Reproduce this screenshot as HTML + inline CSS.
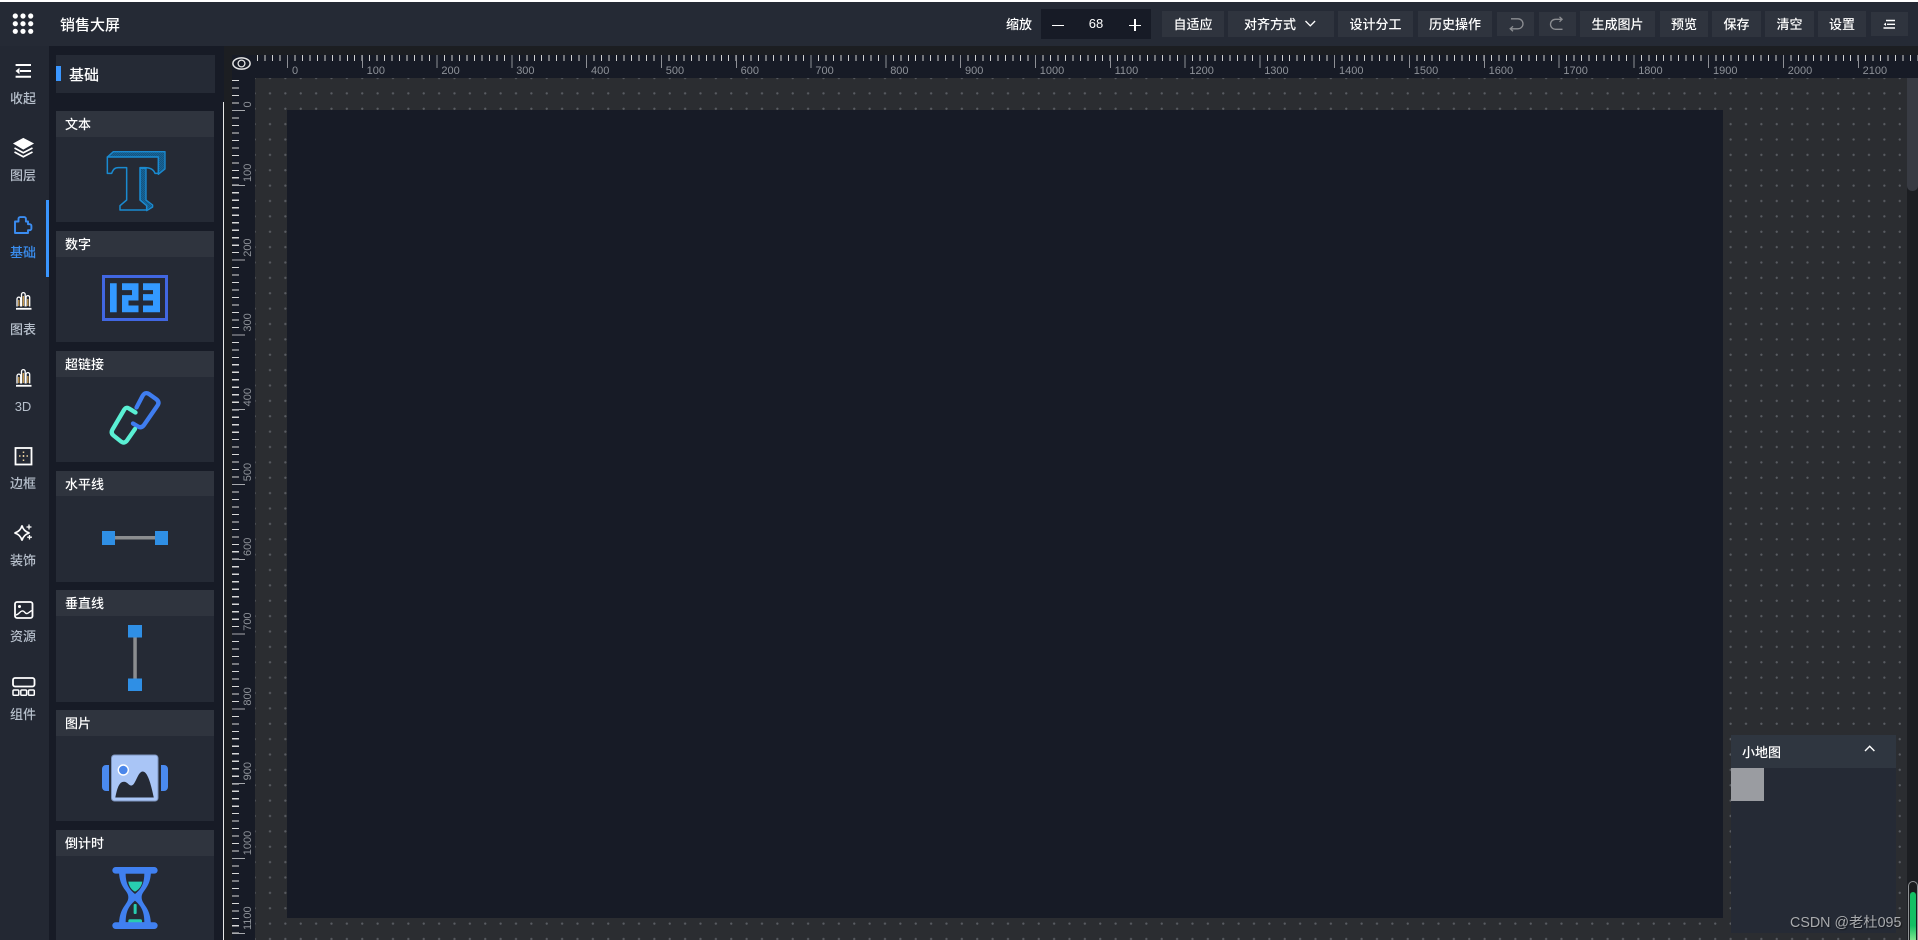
<!DOCTYPE html>
<html lang="zh-CN">
<head>
<meta charset="utf-8">
<title>销售大屏</title>
<style>
html,body{margin:0;padding:0;width:1918px;height:940px;overflow:hidden;background:#1c1e22}
body{position:relative;font-family:"Liberation Sans","Noto Sans CJK SC",sans-serif;color:#fff;font-size:13px;font-weight:500}
.a{position:absolute}
.t{position:absolute;white-space:nowrap;line-height:20px}
.btn{position:absolute;top:11px;height:26px;box-sizing:border-box;padding-top:1px;background:#2f343e;display:flex;align-items:center;justify-content:center;font-size:13px;color:#fff;line-height:1}
.nav{position:absolute;left:0;width:46px;text-align:center;font-size:13px;line-height:18px;color:#b6bfcb}
.head{position:absolute;left:56px;width:158px;height:26px;background:#2f343e;font-size:13px;line-height:28px;text-indent:9px;color:#fff}
.body{position:absolute;left:56px;width:158px;background:#252a35}
.hl{position:absolute;top:66px;font-size:11px;line-height:10px;color:#8e9299;font-weight:400;font-family:"Liberation Sans",sans-serif}
svg{position:absolute;overflow:visible}
</style>
</head>
<body>
<div class="a" style="left:0;top:2px;width:1918px;height:44px;background:#252a35"></div>
<div class="a" style="left:0;top:0;width:1918px;height:2px;background:#fff"></div>
<div class="a" style="left:0;top:46px;width:49px;height:894px;background:#232833"></div>
<div class="a" style="left:49px;top:46px;width:175px;height:894px;background:#171b26"></div>
<div class="a" style="left:46px;top:200px;width:3px;height:77px;background:#3a96ff"></div>
<div class="a" style="left:223px;top:102px;width:1px;height:838px;background:#e8e8e8"></div>

<!-- canvas area -->
<div class="a" style="left:255px;top:78px;width:1652px;height:862px;background-color:#2b2d31;background-image:radial-gradient(circle at center,#595c62 0,#595c62 .9px,rgba(89,92,98,0) 1.4px);background-size:15.39px 15.39px;background-position:7.3px -7.7px"></div>
<div class="a" style="left:287px;top:110px;width:1436px;height:808px;background:#171b26"></div>
<div class="a" style="left:1907px;top:78px;width:11px;height:862px;background:#1c1e22"></div>
<div class="a" style="left:1907px;top:78px;width:11px;height:113px;background:#383b43;border-radius:0 0 5px 5px"></div>

<!-- horizontal ruler -->
<div class="a" style="left:232px;top:55px;width:1686px;height:23px;background:#171b26"></div>
<div class="a" style="left:257.38px;top:55px;width:1661px;height:6px;background:repeating-linear-gradient(90deg,#cfcfcf 0,#cfcfcf 1px,transparent 1px,transparent 7.48px)"></div>
<div class="a" style="left:287.3px;top:55px;width:1631px;height:13px;background:repeating-linear-gradient(90deg,#8e9096 0,#8e9096 1px,transparent 1px,transparent 74.8px)"></div>
<span class="hl" style="left:292px">0</span><span class="hl" style="left:366.6px">100</span><span class="hl" style="left:441.4px">200</span><span class="hl" style="left:516.2px">300</span><span class="hl" style="left:591px">400</span><span class="hl" style="left:665.8px">500</span><span class="hl" style="left:740.6px">600</span><span class="hl" style="left:815.4px">700</span><span class="hl" style="left:890.2px">800</span><span class="hl" style="left:965px">900</span><span class="hl" style="left:1039.8px">1000</span><span class="hl" style="left:1114.6px">1100</span><span class="hl" style="left:1189.4px">1200</span><span class="hl" style="left:1264.2px">1300</span><span class="hl" style="left:1339px">1400</span><span class="hl" style="left:1413.8px">1500</span><span class="hl" style="left:1488.6px">1600</span><span class="hl" style="left:1563.4px">1700</span><span class="hl" style="left:1638.2px">1800</span><span class="hl" style="left:1713px">1900</span><span class="hl" style="left:1787.8px">2000</span><span class="hl" style="left:1862.6px">2100</span>

<!-- vertical ruler -->
<div class="a" style="left:232px;top:78px;width:23px;height:862px;background:#171b26"></div>
<div class="a" style="left:232px;top:80px;width:7px;height:860px;background:repeating-linear-gradient(180deg,#d8d8d8 0,#d8d8d8 1.2px,transparent 1.2px,transparent 7.48px)"></div>
<div class="a" style="left:232px;top:110px;width:13px;height:830px;background:repeating-linear-gradient(180deg,#a8aaae 0,#a8aaae 1px,transparent 1px,transparent 74.8px)"></div>
<svg style="left:0;top:0" width="1918" height="940" font-family="Liberation Sans,sans-serif" font-size="11" font-weight="400" fill="#8e9299">
<text transform="translate(251,107.500) rotate(-90)">0</text>
<text transform="translate(251,182) rotate(-90)">100</text>
<text transform="translate(251,256.800) rotate(-90)">200</text>
<text transform="translate(251,331.600) rotate(-90)">300</text>
<text transform="translate(251,406.400) rotate(-90)">400</text>
<text transform="translate(251,481.200) rotate(-90)">500</text>
<text transform="translate(251,556) rotate(-90)">600</text>
<text transform="translate(251,630.800) rotate(-90)">700</text>
<text transform="translate(251,705.600) rotate(-90)">800</text>
<text transform="translate(251,780.400) rotate(-90)">900</text>
<text transform="translate(251,855.200) rotate(-90)">1000</text>
<text transform="translate(251,930) rotate(-90)">1100</text>
</svg>
<svg style="left:0;top:0" width="1918" height="940">
<ellipse cx="241.500" cy="63.500" rx="8.600" ry="5.600" fill="none" stroke="#e4e4e4" stroke-width="1.500"/>
<circle cx="241.500" cy="63.500" r="3.400" fill="none" stroke="#e4e4e4" stroke-width="1.300"/>
</svg>

<!-- top bar -->
<svg style="left:0;top:0" width="60" height="46" fill="#fff">
<circle cx="15.300" cy="16" r="2.600"/><circle cx="23" cy="16" r="2.600"/><circle cx="30.700" cy="16" r="2.600"/>
<circle cx="15.300" cy="23.700" r="2.600"/><circle cx="23" cy="23.700" r="2.600"/><circle cx="30.700" cy="23.700" r="2.600"/>
<circle cx="15.300" cy="31.300" r="2.600"/><circle cx="23" cy="31.300" r="2.600"/><circle cx="30.700" cy="31.300" r="2.600"/>
</svg>
<span class="t" style="left:60px;top:16px;font-size:15px">销售大屏</span>
<span class="t" style="left:1006px;top:15px">缩放</span>
<div class="a" style="left:1041px;top:9px;width:110px;height:30px;background:#171b26"></div>
<div class="a" style="left:1052px;top:24.500px;width:12px;height:1.500px;background:#fff"></div>
<div class="a" style="left:1129px;top:24.500px;width:12px;height:1.500px;background:#fff"></div>
<div class="a" style="left:1134.300px;top:19px;width:1.500px;height:12px;background:#fff"></div>
<span class="t" style="left:1086px;top:13.500px;font-size:13px;width:20px;text-align:center">68</span>
<div class="btn" style="left:1162px;width:62px">自适应</div>
<div class="btn" style="left:1228px;width:106px;justify-content:flex-start;padding-left:0"><span style="margin-left:16px">对齐方式</span></div>
<svg style="left:0;top:0" width="1400" height="46"><path d="M1305.500 21l4.800 4.800 4.800-4.800" fill="none" stroke="#fff" stroke-width="1.300"/></svg>
<div class="btn" style="left:1338px;width:75px">设计分工</div>
<div class="btn" style="left:1418px;width:74px">历史操作</div>
<div class="btn" style="left:1497px;top:12px;height:24px;width:37px"></div>
<div class="btn" style="left:1539px;top:12px;height:24px;width:37px"></div>
<div class="btn" style="left:1580px;width:75px">生成图片</div>
<div class="btn" style="left:1660px;width:48px">预览</div>
<div class="btn" style="left:1712px;width:49px">保存</div>
<div class="btn" style="left:1765px;width:49px">清空</div>
<div class="btn" style="left:1818px;width:48px">设置</div>
<div class="btn" style="left:1871px;top:12px;height:24px;width:37px"></div>
<svg style="left:0;top:0" width="1918" height="46" fill="none">
<path d="M1511 18.800h7a5 5 0 0 1 0 10h-7.500M1513 26.300l-2.800 2.500 2.800 2.400" stroke="#8c8e92" stroke-width="1.300"/>
<path d="M1561.500 19.300h-6a5 5 0 0 0 0 10h7M1559.500 16.800l2.600 2.500-2.600 2.500" stroke="#8c8e92" stroke-width="1.300"/>
<path d="M1886 20.500h9M1887 24.300h8M1883.500 28h11.500" stroke="#fff" stroke-width="1.400"/>
<path d="M1886 22.600v3.400l-2.300-1.700z" fill="#fff"/>
</svg>

<!-- sidebar nav -->
<svg style="left:0;top:0" width="49" height="720" fill="none" stroke="#fff">
<path d="M15.600 65H31M20 71h11M15.600 76.800H31" stroke-width="2"/>
<path d="M19.500 67.800v6.400l-4-3.200z" fill="#fff" stroke="none"/>
<path d="M23.300 138.500l9.700 5-9.700 5.500-9.300-5.500z" fill="#fff" stroke="#fff" stroke-width="1"/>
<path d="M14.500 148l8.800 4.800 9.200-4.800M14.500 152l8.800 4.800 9.200-4.800" stroke-width="1.700"/>
<path d="M15 221.500h3.500v-2.700a1.700 1.700 0 0 1 1.700-1.700h4a1.700 1.700 0 0 1 1.700 1.700v2.700h2.100v2.700h1.700a1.700 1.700 0 0 1 1.700 1.700v2.600a1.700 1.700 0 0 1-1.700 1.700h-1.700v2.800H15z" stroke="#3b8df2" stroke-width="1.900" stroke-linejoin="round"/>
<g stroke-width="1.300"><path d="M17 306.500v-7.500a1.700 1.700 0 0 1 3.700 0v7.500M21.500 306.500v-12a1.700 1.700 0 0 1 3.700 0v12M26 306.500v-9a1.700 1.700 0 0 1 3.700 0v9"/><path d="M16 308.800h15.500" stroke-width="1.800"/><path d="M18.800 300v6M23.300 296v10M27.800 299v7" stroke="#d9a650" stroke-width="1.200"/></g>
<g stroke-width="1.300"><path d="M17 383.500v-7.500a1.700 1.700 0 0 1 3.700 0v7.500M21.500 383.500v-12a1.700 1.700 0 0 1 3.700 0v12M26 383.500v-9a1.700 1.700 0 0 1 3.700 0v9"/><path d="M16 385.800h15.500" stroke-width="1.800"/><path d="M18.800 377v6M23.300 373v10M27.800 376v7" stroke="#d9a650" stroke-width="1.200"/></g>
<rect x="15.500" y="448" width="16" height="16.500" stroke-width="1.800"/>
<path d="M23.500 451.500v1.500M23.500 455v2M23.500 459.500v1.500M19 456h1.500M26.500 456h1.500" stroke="#e8d0a0" stroke-width="1.500"/>
<path d="M22 525.500Q23.500 531.500 29.500 533 23.500 534.500 22 540.500 20.500 534.500 14.500 533 20.500 531.500 22 525.500z" stroke-width="1.600"/>
<path d="M29 524.500v5M26.500 527h5M29.500 535v4.500M27.200 537.200h4.700" stroke-width="1.300"/>
<rect x="15" y="602" width="17.500" height="16" rx="2" stroke-width="1.800"/>
<circle cx="19.500" cy="606.500" r="1.500" fill="#fff" stroke="none"/>
<path d="M16 615c3-.500 3.500-3.500 6-4 3-.500 2.500 3 5 2.500 2-.300 3-2.500 5-3" stroke-width="1.400"/>
<rect x="13" y="678" width="21.500" height="8.500" rx="2" stroke-width="1.800"/>
<rect x="13" y="690" width="5.800" height="5.200" rx="1" stroke-width="1.500"/>
<rect x="20.800" y="690" width="5.800" height="5.200" rx="1" stroke-width="1.500"/>
<rect x="28.500" y="690" width="5.800" height="5.200" rx="1" stroke-width="1.500"/>
</svg>
<div class="nav" style="top:90px">收起</div>
<div class="nav" style="top:167px">图层</div>
<div class="nav" style="top:244px;color:#3a8ef0">基础</div>
<div class="nav" style="top:321px">图表</div>
<div class="nav" style="top:398px">3D</div>
<div class="nav" style="top:475px">边框</div>
<div class="nav" style="top:552px">装饰</div>
<div class="nav" style="top:628px">资源</div>
<div class="nav" style="top:706px">组件</div>

<!-- panel -->
<div class="a" style="left:56px;top:55px;width:159px;height:38px;background:#252a35"></div>
<div class="a" style="left:56px;top:66px;width:5px;height:15px;background:#3a96ff"></div>
<span class="t" style="left:69px;top:66px;font-size:15px">基础</span>

<div class="body" style="top:137px;height:85px"></div><div class="head" style="top:111px">文本</div>
<div class="body" style="top:257px;height:85px"></div><div class="head" style="top:231px">数字</div>
<div class="body" style="top:377px;height:85px"></div><div class="head" style="top:351px">超链接</div>
<div class="body" style="top:496px;height:86px"></div><div class="head" style="top:471px;height:25px;line-height:27px">水平线</div>
<div class="body" style="top:616px;height:86px"></div><div class="head" style="top:590px">垂直线</div>
<div class="body" style="top:736px;height:85px"></div><div class="head" style="top:710px">图片</div>
<div class="body" style="top:856px;height:84px"></div><div class="head" style="top:830px">倒计时</div>

<svg style="left:0;top:0" width="230" height="940">
<defs>
<pattern id="dith" width="2" height="2" patternUnits="userSpaceOnUse"><rect width="2" height="2" fill="#123a58"/><rect width="1" height="1" fill="#1a7fc0"/><rect x="1" y="1" width="1" height="1" fill="#1a7fc0"/></pattern>
</defs>
<!-- T -->
<g transform="translate(100,145) scale(.3333)" stroke-linejoin="round">
<path d="M22 36L40 20H195V72L175 88V36zM120 70H138V165L158 180V186L140 197V182L120 165z" fill="url(#dith)" stroke="#1a8ad0" stroke-width="4"/>
<path d="M22 36H175V85H165C160 72 150 68 135 68H120V165L140 182V195H60V182L80 165V68H55C45 68 40 72 35 85H22z" fill="#252a35" stroke="#1a8ad0" stroke-width="4.500"/>
</g>
<!-- 123 -->
<rect x="103.500" y="276.500" width="63" height="43" fill="none" stroke="#4167e2" stroke-width="3"/>
<path d="M110 283.300h6.700v29H110zM122 283.300h16.500v17.200h-10v5h10v6.800H122V295.100h10v-5h-10zM143 283.300h17v29h-17v-6.800h10v-5h-10v-6.400h10v-4h-10z" fill="#3399ff"/>
<!-- link -->
<g fill="none" stroke-width="4.300" stroke-linejoin="round" stroke-linecap="round">
<path d="M136.500 407.500L142.500 396Q145 391.500 149 394L156 399Q160 402 157.500 405.500L144 425Q141.500 428.500 138 426.500L133 423.500" stroke="#3f7df0"/>
<path d="M135.500 412.500L129 408.500Q126 406.500 124 410L112.500 429.500Q110.500 433 113.500 435.500L121 441.500Q124.500 444 127 440.500L135 429" stroke="#5af0d4"/>
</g>
<!-- h line -->
<rect x="115" y="536" width="40" height="3.500" fill="#8b8d90"/>
<rect x="102" y="531" width="13" height="14" fill="#2f8fe5"/>
<rect x="155" y="531" width="13" height="14" fill="#2f8fe5"/>
<!-- v line -->
<rect x="133.300" y="637" width="3.500" height="42" fill="#8b8d90"/>
<rect x="128" y="625" width="14" height="12.500" fill="#2f8fe5"/>
<rect x="128" y="678.500" width="14" height="12.500" fill="#2f8fe5"/>
<!-- picture -->
<path d="M109 765v26h-3a4 4 0 0 1-4-4v-18a4 4 0 0 1 4-4zM161 765v26h3a4 4 0 0 0 4-4v-18a4 4 0 0 0-4-4z" fill="#4a8af0"/>
<rect x="111.500" y="755" width="46.500" height="46" rx="3" fill="#a9c5f6" stroke="#7d94bd" stroke-width="1"/>
<circle cx="123.300" cy="770" r="5" fill="#4a86ea" stroke="#fff" stroke-width="1.400"/>
<path d="M115.300 797.500c1.500-7 3-14 7-15.500 5-1.500 6 4 9.500 3.500 4-1 6-14 11-14 5.500 0 9 17 11 26z" fill="#252a35"/>
<!-- hourglass -->
<g transform="translate(0,700) scale(.3333)">
<path d="M357 511C357 565 385 570 385 592 385 615 357 620 357 677H453C453 620 425 615 425 592 425 570 453 565 453 511Z" fill="#4080f0"/>
<path d="M377 521H433C433 555 420 570 405 582 390 570 377 555 377 521Z" fill="#252a35"/>
<path d="M377 667C377 630 390 615 405 602 420 615 433 630 433 667Z" fill="#252a35"/>
<path d="M385 545H427C425 560 415 570 405 575 395 570 387 560 385 545Z" fill="#28cdb0"/>
<rect x="401" y="612" width="9" height="30" rx="3" fill="#28cdb0"/>
<path d="M385 668v-5a5 5 0 0 1 5-5h31a5 5 0 0 1 5 5v5z" fill="#28cdb0"/>
<rect x="337" y="501" width="136" height="20" rx="10" fill="#4080f0"/>
<rect x="337" y="667" width="136" height="20" rx="10" fill="#4080f0"/>
</g>
</svg>

<!-- minimap -->
<div class="a" style="left:1731px;top:768px;width:165px;height:165px;background:#252a35"></div>
<div class="a" style="left:1731px;top:735px;width:165px;height:33px;background:#2f3640"></div>
<div class="a" style="left:1731px;top:768px;width:33px;height:33px;background:#9a9ca1"></div>
<span class="t" style="left:1742px;top:743px">小地图</span>
<svg style="left:0;top:0" width="1918" height="940" fill="none">
<path d="M1865 751l4.700-4.700 4.700 4.700" stroke="#fff" stroke-width="1.400"/>
</svg>

<!-- watermark & meter -->
<div class="a" style="left:1908px;top:881px;width:9.500px;height:59px;background:#1a1c1e;border:1px solid #8f9194;border-bottom:0;border-radius:5px 5px 0 0;box-sizing:border-box"></div>
<div class="a" style="left:1909.500px;top:892px;width:6.500px;height:48px;background:linear-gradient(180deg,#14c064 0,#14c064 70%,#7fe68f 100%);border-radius:3px 3px 0 0"></div>
<span class="t" style="left:1790px;top:913px;font-size:14.300px;font-weight:400;color:#a9abae;text-shadow:1px 1px 1px rgba(0,0,0,.5)">CSDN @老杜095</span>
</body>
</html>
